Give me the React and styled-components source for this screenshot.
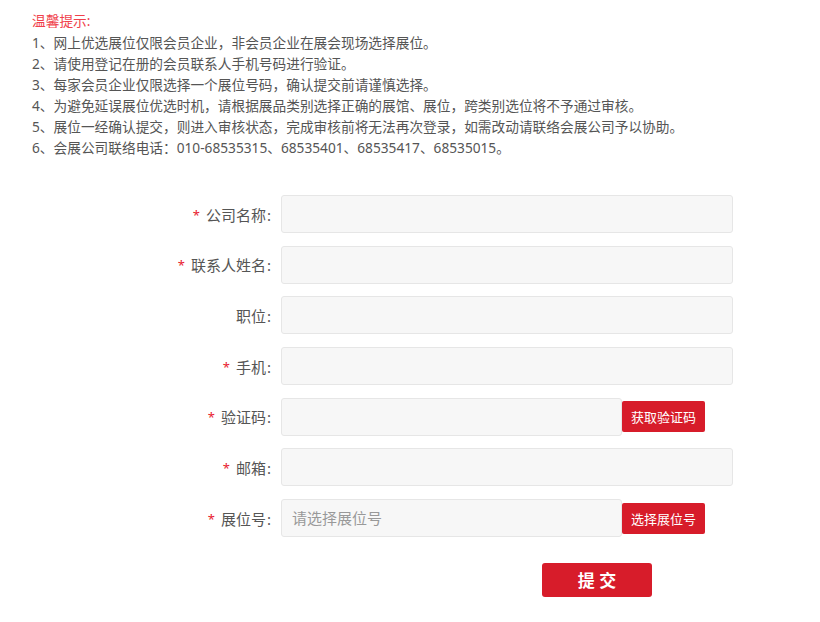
import styled, { createGlobalStyle } from 'styled-components'

const GlobalStyle = createGlobalStyle`
  body {
    margin: 0;
    background: #ffffff;
    font-family: "Noto Sans", "Noto Sans CJK SC", sans-serif;
  }
`

const tips = [
  '1、网上优选展位仅限会员企业，非会员企业在展会现场选择展位。',
  '2、请使用登记在册的会员联系人手机号码进行验证。',
  '3、每家会员企业仅限选择一个展位号码，确认提交前请谨慎选择。',
  '4、为避免延误展位优选时机，请根据展品类别选择正确的展馆、展位，跨类别选位将不予通过审核。',
  '5、展位一经确认提交，则进入审核状态，完成审核前将无法再次登录，如需改动请联络会展公司予以协助。',
  '6、会展公司联络电话：010-68535315、68535401、68535417、68535015。',
]

const fields = [
  { label: '公司名称', required: true },
  { label: '联系人姓名', required: true },
  { label: '职位', required: false },
  { label: '手机', required: true },
  { label: '验证码', required: true, button: '获取验证码' },
  { label: '邮箱', required: true },
  { label: '展位号', required: true, button: '选择展位号', placeholder: '请选择展位号' },
]

export default function App() {
  return (
    <>
      <GlobalStyle />
      <Page>
        <Tips>
          <TipTitle>温馨提示:</TipTitle>
          {tips.map(t => <TipLine key={t}>{t}</TipLine>)}
        </Tips>
        <Form>
          {fields.map(f => (
            <Row key={f.label}>
              <Label>
                {f.required && <Star>*</Star>}
                {f.label}
                <Colon>:</Colon>
              </Label>
              <Input short={!!f.button} placeholder={f.placeholder || ''} />
              {f.button && <SideButton type="button">{f.button}</SideButton>}
            </Row>
          ))}
          <Actions>
            <Submit type="button">提 交</Submit>
          </Actions>
        </Form>
      </Page>
    </>
  )
}

const Page = styled.div`
  width: 820px;
  min-height: 622px;
`

const Tips = styled.div`
  padding: 10px 0 0 32px;
  font-size: 13.7px;
  line-height: 21px;
  color: #555;
`

const TipTitle = styled.div`
  color: #f0414b;
  margin-bottom: 1px;
`

const TipLine = styled.div`
  white-space: nowrap;
`

const Form = styled.div`
  margin-top: 37px;
  display: flex;
  flex-direction: column;
  gap: 12.7px;
`

const Row = styled.div`
  display: flex;
  align-items: center;
  height: 38px;
`

const Label = styled.label`
  width: 271px;
  margin-right: 10px;
  text-align: right;
  font-size: 15px;
  color: #555;
`

const Colon = styled.span`
  margin-left: 1px;
`

const Star = styled.span`
  color: #e8202e;
  font-size: 13px;
  margin-right: 6px;
  vertical-align: 1px;
`

const Input = styled.input`
  box-sizing: border-box;
  width: ${p => (p.short ? '341px' : '452px')};
  height: 38px;
  padding: 0 10px;
  border: 1px solid #e6e6e6;
  border-radius: 3px;
  background: #f7f7f7;
  font-family: inherit;
  font-size: 15px;
  color: #333;
  outline: none;

  &::placeholder {
    color: #999;
  }
`

const SideButton = styled.button`
  width: 83px;
  height: 31px;
  border: none;
  border-radius: 2px;
  background: #d71c2a;
  color: #fff;
  font-family: inherit;
  font-size: 13px;
  padding: 0;
  cursor: pointer;
`

const Actions = styled.div`
  padding: 13px 0 0 542px;
`

const Submit = styled.button`
  width: 110px;
  height: 34px;
  border: none;
  border-radius: 3px;
  background: #d71c2a;
  color: #fff;
  font-family: inherit;
  font-size: 17px;
  font-weight: bold;
  cursor: pointer;
`
